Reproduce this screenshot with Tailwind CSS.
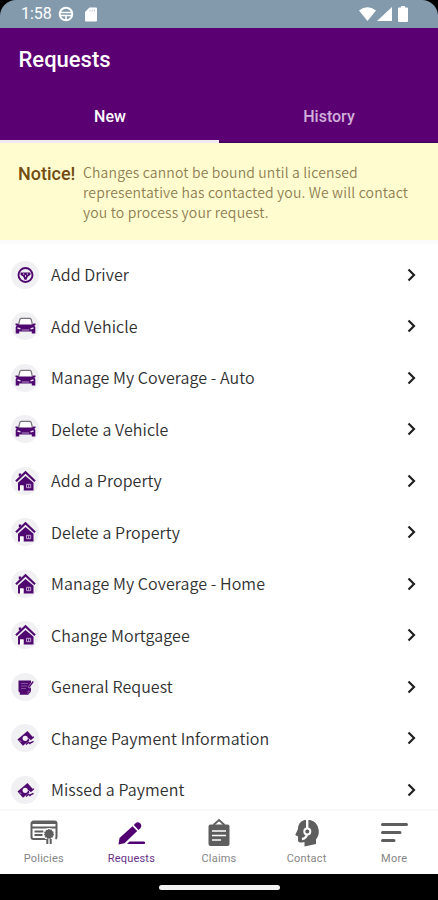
<!DOCTYPE html>
<html lang="en">
  <head>
    <meta charset="UTF-8" />
    <meta name="viewport" content="width=device-width, initial-scale=1" />
    <title>Requests</title>
    <script src="https://cdn.jsdelivr.net/npm/@tailwindcss/browser@4"></script>
  </head>
  <body class="bg-black">
    <!-- icon sprite -->
    <svg class="hidden">
      <symbol id="wheel" viewBox="0 0 28 28">
        <circle cx="14.500" cy="14" r="7" fill="none" stroke="currentColor" stroke-width="1.900" />
        <path d="M9.500 11.500h10v2.200l-2.800 2-1.200 3h-2l-1.200-3-2.800-2z" fill="currentColor" />
        <path d="M12 13h1.200M15.800 13H17M14.500 14.200v1.600" stroke="#f1f0f2" stroke-width="1" />
      </symbol>
      <symbol id="car" viewBox="0 0 28 28">
        <path d="M7.500 13l1.300-5.500q.3-1.200 1.400-1.200h8.600q1.100 0 1.400 1.200l1.300 5.500" fill="#fff" stroke="#77727c" stroke-width="1.200" />
        <path d="M4.500 11.500h2l1 1h14l1-1h2v1.500l-1.200.5 1 1.500V21.500h-3.500v-2h-12.600v2H4.700V15l1-1.500-1.200-.5z" fill="currentColor" />
        <path d="M6.500 16l3 .8M22.500 16l-3 .8" stroke="#e9dff0" stroke-width="1.300" />
        <path d="M10.800 18h7.400" stroke="#bfa6d0" stroke-width=".9" />
      </symbol>
      <symbol id="house" viewBox="0 0 28 28">
        <path d="M7.800 9.500V6.500h2.400v2z" fill="currentColor" />
        <path d="M5 14.200L14.500 5.300l9.500 8.900" fill="none" stroke="currentColor" stroke-width="2.200" />
        <path d="M7 15.800L14.500 9l8 6.800V23.500H12.500v-5H9v5H7z" fill="currentColor" />
        <path d="M15.500 17.300h4.200v3.400h-4.200zM17.600 17.300v3.400" fill="none" stroke="#c9b0d8" stroke-width=".9" />
        <path d="M9 18.500h3.500v5H9z" fill="#fff" />
      </symbol>
      <symbol id="note" viewBox="0 0 28 28">
        <path d="M7.500 7.500H20v11l-2.800 3.300H8.800V19.500l-1.300-1z" fill="currentColor" />
        <path d="M10 10.500h7M10 13h6.500M10 15.500h5M17 21.200v-3h3" fill="none" stroke="#8f62ac" stroke-width=".8" />
        <path d="M18 14.800l4.200-6.300" stroke="#f1f0f2" stroke-width="2.400" />
        <path d="M17.800 14.500l4.400-6" stroke="currentColor" stroke-width="1.300" />
      </symbol>
      <symbol id="cash" viewBox="0 0 28 28">
        <path d="M6.500 15.500l10-8.500 5.500 6.300-10 8.500z" fill="currentColor" />
        <path d="M19 16l3.800-3.300M18.500 19.300l4-2M15 20.500l2.500-2.300 2 1.800" fill="none" stroke="currentColor" stroke-width="1.500" />
        <circle cx="14.200" cy="14.300" r="2.600" fill="#f5f0f8" />
        <path d="M17.500 14.500l2.500 2.300M9 16.500l1 1.200" stroke="#f1f0f2" stroke-width=".9" />
      </symbol>
      <symbol id="chevron" viewBox="0 0 10 14">
        <path d="M1.500 1.500L7 7l-5.500 5.500" fill="none" stroke="currentColor" stroke-width="2.200" />
      </symbol>
    </svg>

    <div class="flex h-[900px] w-[438px] flex-col overflow-hidden font-['Roboto',sans-serif]">
      <!-- status bar -->
      <div class="flex h-7 shrink-0 items-center rounded-t-[16px] bg-[#829aac] pl-[21px] pr-[30px] text-white">
        <span class="w-[37px] text-[16px] leading-7">1:58</span>
        <svg class="h-4 w-4" viewBox="0 0 16 16" fill="none" stroke="currentColor">
          <circle cx="8" cy="8" r="6.300" stroke-width="2" />
          <path d="M1.500 6.500h13M2 9.500h12M8 9v5" stroke-width="1.600" />
        </svg>
        <svg class="ml-[11px] h-[15px] w-3" viewBox="0 0 12 15" fill="currentColor">
          <path d="M4.500.500H11a1 1 0 0 1 1 1v12a1 1 0 0 1-1 1H1a1 1 0 0 1-1-1V5z" />
          <path d="M5 2.500v2M7.200 2.500v2M9.400 2.500v2" stroke="#829aac" stroke-width=".5" />
        </svg>
        <svg class="ml-auto h-[14px] w-[17px]" viewBox="0 0 17 14" fill="currentColor">
          <path d="M0 3.500Q8.500-3 17 3.500L8.500 14z" />
        </svg>
        <svg class="ml-px h-[14px] w-[15px]" viewBox="0 0 15 14" fill="currentColor">
          <path d="M15 0v14H0z" />
        </svg>
        <svg class="ml-[6px] h-[16px] w-[10px]" viewBox="0 0 10 16" fill="currentColor">
          <path d="M3 0h4v1.500h2a1 1 0 0 1 1 1V15a1 1 0 0 1-1 1H1a1 1 0 0 1-1-1V2.500a1 1 0 0 1 1-1h2z" />
        </svg>
      </div>

      <!-- header and tabs -->
      <header class="flex h-[115px] shrink-0 flex-col bg-[#5a0073]">
        <h1 class="h-16 pl-[18.5px] text-[22px] font-medium leading-[64px] text-white">Requests</h1>
        <nav class="grid h-[51px] grid-cols-2 text-center text-[16px] font-medium leading-[46px]">
          <a class="h-[51px] border-b-[3px] border-[#f3e9f3] pl-px pt-[2px] text-white">New</a>
          <a class="h-[51px] border-b-2 border-[#4a0063] pl-px pt-[2px] text-[#d3afdb]">History</a>
        </nav>
      </header>

      <!-- notice -->
      <section class="flex h-[97px] shrink-0 bg-[#fffdcf] pl-[18px] pt-[19px] font-['Noto_Sans_CJK_SC',sans-serif]">
        <strong class="w-[65px] pt-px font-['Roboto',sans-serif] text-[18px] font-medium leading-[22px] text-[#704c10]">Notice!</strong>
        <p class="whitespace-nowrap text-[14px] font-[350] leading-5 tracking-[0.15px] text-[#8f7d52]">
          Changes cannot be bound until a licensed<br />
          representative has contacted you. We will contact<br />
          you to process your request.
        </p>
      </section>

      <!-- request types -->
      <main class="min-h-0 flex-1 overflow-hidden border-t-4 border-[#fbfbfb] bg-white pt-[5px] font-['Noto_Sans_CJK_SC',sans-serif] text-[16px] font-[350] leading-[25px] tracking-[0.08px] text-[#303030]">
        <a class="flex h-[51.5px] items-center pl-[11px] pr-[21px]">
          <svg class="mr-3 h-7 w-7 rounded-full bg-[#f1f0f2] text-[#4f0870]"><use href="#wheel" /></svg>
          Add Driver
          <svg class="ml-auto h-[14px] w-[10px] text-[#202020]"><use href="#chevron" /></svg>
        </a>
        <a class="flex h-[51.5px] items-center pl-[11px] pr-[21px]">
          <svg class="mr-3 h-7 w-7 rounded-full bg-[#f1f0f2] text-[#4f0870]"><use href="#car" /></svg>
          Add Vehicle
          <svg class="ml-auto h-[14px] w-[10px] text-[#202020]"><use href="#chevron" /></svg>
        </a>
        <a class="flex h-[51.5px] items-center pl-[11px] pr-[21px]">
          <svg class="mr-3 h-7 w-7 rounded-full bg-[#f1f0f2] text-[#4f0870]"><use href="#car" /></svg>
          Manage My Coverage - Auto
          <svg class="ml-auto h-[14px] w-[10px] text-[#202020]"><use href="#chevron" /></svg>
        </a>
        <a class="flex h-[51.5px] items-center pl-[11px] pr-[21px]">
          <svg class="mr-3 h-7 w-7 rounded-full bg-[#f1f0f2] text-[#4f0870]"><use href="#car" /></svg>
          Delete a Vehicle
          <svg class="ml-auto h-[14px] w-[10px] text-[#202020]"><use href="#chevron" /></svg>
        </a>
        <a class="flex h-[51.5px] items-center pl-[11px] pr-[21px]">
          <svg class="mr-3 h-7 w-7 rounded-full bg-[#f1f0f2] text-[#4f0870]"><use href="#house" /></svg>
          Add a Property
          <svg class="ml-auto h-[14px] w-[10px] text-[#202020]"><use href="#chevron" /></svg>
        </a>
        <a class="flex h-[51.5px] items-center pl-[11px] pr-[21px]">
          <svg class="mr-3 h-7 w-7 rounded-full bg-[#f1f0f2] text-[#4f0870]"><use href="#house" /></svg>
          Delete a Property
          <svg class="ml-auto h-[14px] w-[10px] text-[#202020]"><use href="#chevron" /></svg>
        </a>
        <a class="flex h-[51.5px] items-center pl-[11px] pr-[21px]">
          <svg class="mr-3 h-7 w-7 rounded-full bg-[#f1f0f2] text-[#4f0870]"><use href="#house" /></svg>
          Manage My Coverage - Home
          <svg class="ml-auto h-[14px] w-[10px] text-[#202020]"><use href="#chevron" /></svg>
        </a>
        <a class="flex h-[51.5px] items-center pl-[11px] pr-[21px]">
          <svg class="mr-3 h-7 w-7 rounded-full bg-[#f1f0f2] text-[#4f0870]"><use href="#house" /></svg>
          Change Mortgagee
          <svg class="ml-auto h-[14px] w-[10px] text-[#202020]"><use href="#chevron" /></svg>
        </a>
        <a class="flex h-[51.5px] items-center pl-[11px] pr-[21px]">
          <svg class="mr-3 h-7 w-7 rounded-full bg-[#f1f0f2] text-[#4f0870]"><use href="#note" /></svg>
          General Request
          <svg class="ml-auto h-[14px] w-[10px] text-[#202020]"><use href="#chevron" /></svg>
        </a>
        <a class="flex h-[51.5px] items-center pl-[11px] pr-[21px]">
          <svg class="mr-3 h-7 w-7 rounded-full bg-[#f1f0f2] text-[#4f0870]"><use href="#cash" /></svg>
          Change Payment Information
          <svg class="ml-auto h-[14px] w-[10px] text-[#202020]"><use href="#chevron" /></svg>
        </a>
        <a class="flex h-[51.5px] items-center pl-[11px] pr-[21px]">
          <svg class="mr-3 h-7 w-7 rounded-full bg-[#f1f0f2] text-[#4f0870]"><use href="#cash" /></svg>
          Missed a Payment
          <svg class="ml-auto h-[14px] w-[10px] text-[#202020]"><use href="#chevron" /></svg>
        </a>
      </main>

      <!-- bottom navigation -->
      <nav class="grid h-[65px] shrink-0 grid-cols-5 border-t-2 border-[#f8f8f8] bg-white text-[11px] leading-[14px] tracking-[0.2px] text-[#858585]">
        <a class="flex flex-col items-center pt-2">
          <svg class="mb-[5px] h-7 w-7 text-[#5e5e5e]" viewBox="0 0 28 28" fill="none" stroke="currentColor">
            <path d="M17 20H3.500a2 2 0 0 1-2-2V4.500a2 2 0 0 1 2-2h21a2 2 0 0 1 2 2V18a2 2 0 0 1-1 1.800" stroke-width="2" />
            <path d="M2 4h24M2 8.500h24M4.500 12.500h9M4.500 16h8" stroke-width="2" />
            <circle cx="19" cy="15" r="6" fill="#fff" stroke="none" />
            <circle cx="19" cy="15" r="4.200" fill="currentColor" stroke-width="1.500" stroke-dasharray="1.500 .8" />
            <path d="M17.300 20v5M20.700 20v5" stroke-width="2" />
          </svg>
          Policies
        </a>
        <a class="flex flex-col items-center pt-2 text-[#6a3188]">
          <svg class="mb-[5px] h-7 w-7 text-[#520071]" viewBox="0 0 28 28" fill="currentColor">
            <path d="M1.500 25.500l1-6.500L15.500 7.200l4.700 4.700L7.500 24.200z" />
            <path d="M16.800 6l1.500-1.600q2.700-2.200 5 .2 2 2.500 0 4.700L21.500 10.900z" />
            <path d="M12.500 22.500H27a1 1 0 0 1 0 2.500H10z" />
          </svg>
          Requests
        </a>
        <a class="flex flex-col items-center pt-2">
          <svg class="mb-[5px] h-7 w-7 text-[#5e5e5e]" viewBox="0 0 28 28" fill="none" stroke="currentColor">
            <path d="M8.500 6l5.500-5 5.500 5" stroke-width="1.800" />
            <rect x="3.500" y="5.500" width="21" height="21.500" rx="2" fill="currentColor" stroke="none" />
            <path d="M7 12h14M7 16.500h14M7 21h9" stroke="#fff" stroke-width="1.600" />
          </svg>
          Claims
        </a>
        <a class="flex flex-col items-center pt-2">
          <svg class="mb-[5px] h-7 w-7 text-[#5e5e5e]" viewBox="0 0 28 28">
            <path d="M11.500 1Q5 3 5 10l-2.800 6 2.800 1.500V22q1 2 4 1.500l2.500-.5v4.500L23 25v-4.500q3.300-4 2.700-9.500Q24.500 2.500 17 1z" fill="currentColor" />
            <path d="M14.200 0v9M14.300 13.500q-.5 6-5.300 6.500" fill="none" stroke="#fff" stroke-width="2.400" />
            <circle cx="14.300" cy="12.500" r="3" fill="currentColor" stroke="#fff" stroke-width="2" />
          </svg>
          Contact
        </a>
        <a class="flex flex-col items-center pt-2">
          <svg class="mb-[5px] h-7 w-7 text-[#5e5e5e]" viewBox="0 0 28 28" stroke="currentColor" stroke-width="3" stroke-linecap="round">
            <path d="M2.500 5.500h24M2.500 13.500h17.500M2.500 21.500h11.500" />
          </svg>
          More
        </a>
      </nav>

      <!-- system gesture bar -->
      <div class="flex h-[26px] shrink-0 items-center justify-center bg-black">
        <div class="h-[5px] w-[121px] rounded-full bg-[#f2f2f2]"></div>
      </div>
    </div>
  </body>
</html>
